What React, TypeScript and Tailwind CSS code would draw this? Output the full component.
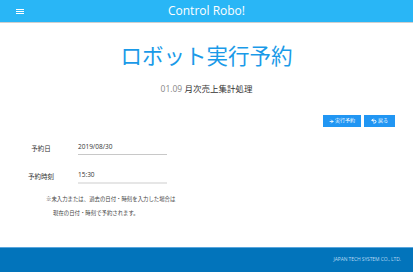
import { ArrowRight, Undo2 } from 'lucide-react'

const font = { fontFamily: '"Open Sans", "Noto Sans CJK JP", sans-serif' }

function FormRow({ label, value, thick }: { label: string; value: string; thick?: boolean }) {
  return (
    <div className="flex items-center">
      <div className="w-[78px] pl-[4px] text-center text-[6.5px] text-[#333]">{label}</div>
      <div
        className={`w-[89px] pb-[2px] text-[6.5px] text-[#333] ${
          thick ? 'border-b-2 border-[#e6e6e6]' : 'border-b border-[#c8c8c8]'
        }`}
      >
        {value}
      </div>
    </div>
  )
}

export default function App() {
  return (
    <div className="w-[413px] h-[272px] flex flex-col bg-white overflow-hidden" style={font}>
      {/* Header */}
      <header className="h-[23px] shrink-0 bg-[#29b6f6] border-b border-[#cfcfcf] relative flex items-center justify-center">
        <div className="absolute left-[16px] top-[9px] flex flex-col gap-[1px]">
          <span className="block w-[8px] h-[1px] bg-white" />
          <span className="block w-[8px] h-[1px] bg-white" />
          <span className="block w-[8px] h-[1px] bg-white" />
        </div>
        <span className="text-white text-[12px] leading-none">Control Robo!</span>
      </header>

      {/* Main */}
      <main className="flex-1 flex flex-col">
        <h1 className="mt-[22px] text-center text-[21.5px] leading-none text-[#1a9ae8]">ロボット実行予約</h1>
        <div className="mt-[18px] text-center text-[8.5px] leading-none">
          <span className="text-[#888]">01.09 </span>
          <span className="text-[#333]">月次売上集計処理</span>
        </div>

        <div className="mt-[22px] flex justify-end gap-[3px] pr-[18px]">
          <button className="h-[12px] w-[38px] bg-[#2196f3] text-white text-[5px] flex items-center justify-center gap-[1px]">
            <ArrowRight size={5} strokeWidth={4} />
            実行予約
          </button>
          <button className="h-[12px] w-[31px] bg-[#2196f3] text-white text-[5px] flex items-center justify-center gap-[1px]">
            <Undo2 size={6} strokeWidth={4} />
            戻る
          </button>
        </div>

        <div className="mt-[15px] flex flex-col gap-[15px]">
          <FormRow label="予約日" value="2019/08/30" />
          <FormRow label="予約時刻" value="15:30" thick />
        </div>

        <div className="mt-[13px] pl-[46px] text-[5.4px] text-[#444] leading-none">
          <p>※未入力または、過去の日付・時刻を入力した場合は</p>
          <p className="mt-[9px] pl-[7px]">現在の日付・時刻で予約されます。</p>
        </div>
      </main>

      {/* Footer */}
      <footer className="h-[25px] shrink-0 bg-[#0274bb] border-t border-[#5aa6dd] flex items-center justify-end pr-[12px]">
        <span className="text-[5px] text-[#b5d8f2] tracking-[-0.1px]">JAPAN TECH SYSTEM CO., LTD.</span>
      </footer>
    </div>
  )
}
